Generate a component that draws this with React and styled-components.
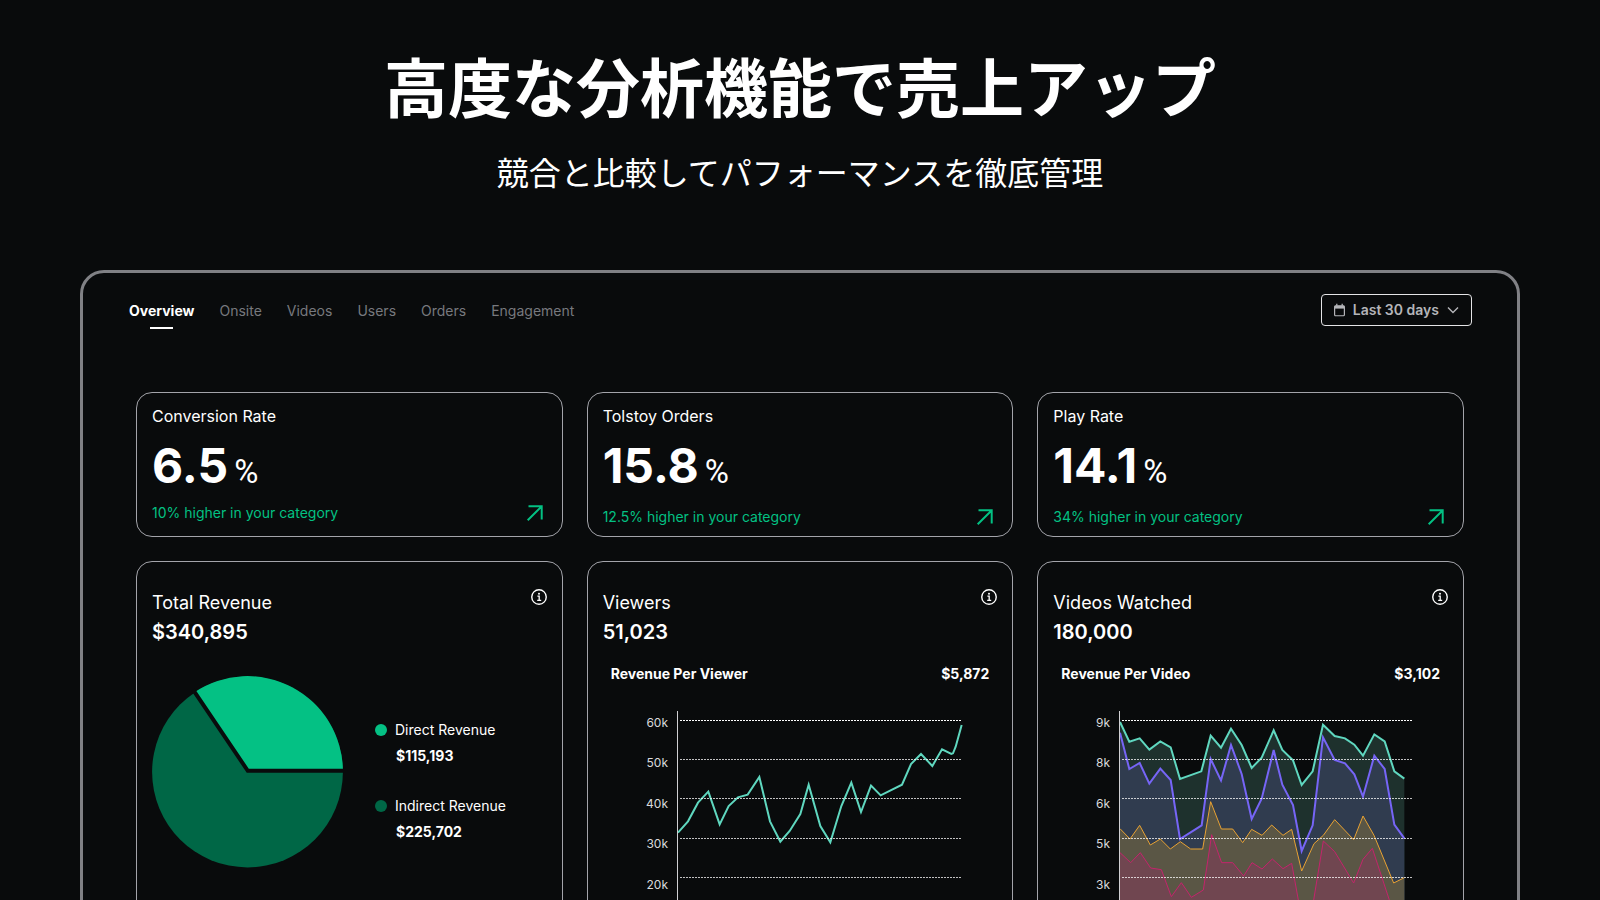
import React from "react";
import styled, { createGlobalStyle } from "styled-components";

const GlobalStyle = createGlobalStyle`
  *, *::before, *::after { box-sizing: border-box; }
  body {
    margin: 0;
    background: #090b0c;
    color: #fff;
    font-family: Inter, "Noto Sans CJK JP", sans-serif;
  }
`;

const Page = styled.main`
  height: 100vh;
  overflow: hidden;
  padding: 36px 80px 0;
  display: flex;
  flex-direction: column;
`;

const Hero = styled.header`
  display: flex;
  flex-direction: column;
  align-items: center;
  gap: 15px;
  text-align: center;
  font-family: "Noto Sans CJK JP", sans-serif;
`;

const Headline = styled.h1`
  margin: 0;
  font-size: 64px;
  line-height: 96px;
  font-weight: 700;
`;

const Tagline = styled.p`
  margin: 0;
  font-size: 32px;
  line-height: 48px;
  font-weight: 400;
`;

const Panel = styled.section`
  flex: none;
  margin-top: 75px;
  padding: 21px 45px 48px;
  border: 3px solid #808185;
  border-radius: 24px;
`;

const Toolbar = styled.div`
  display: flex;
  align-items: flex-start;
  justify-content: space-between;
`;

const Tabs = styled.nav`
  display: flex;
  gap: 25px;
  padding: 6px 0 0 1px;
`;

const Tab = styled.a`
  display: flex;
  flex-direction: column;
  align-items: center;
  gap: 5px;
  font-size: 14px;
  line-height: 22px;
  text-decoration: none;
  color: ${(p) => (p.$active ? "#fff" : "#77797e")};
  font-weight: ${(p) => (p.$active ? 700 : 400)};

  &::after {
    content: "";
    width: 23px;
    height: 2px;
    background: ${(p) => (p.$active ? "#fff" : "transparent")};
  }
`;

const RangeButton = styled.button`
  display: flex;
  align-items: center;
  gap: 8px;
  height: 32px;
  padding: 0 12px;
  border: 1px solid #e4e4e6;
  border-radius: 4px;
  background: transparent;
  color: #b4b5b9;
  font: 600 14px/20px Inter, sans-serif;
  cursor: pointer;
`;

const Grid = styled.div`
  display: grid;
  grid-template-columns: repeat(3, minmax(0, 1fr));
  gap: 24px;
  padding: 63px 8px 0;
`;

const Card = styled.article`
  border: 1px solid #a3a4aa;
  border-radius: 16px;
`;

const StatCard = styled(Card)`
  height: 145px;
  padding: 11px 15px 0;
  display: flex;
  flex-direction: column;
`;

const StatTitle = styled.h2`
  margin: 0;
  font-size: 16px;
  line-height: 24px;
  font-weight: 400;
`;

const StatValue = styled.p`
  margin: 9px 0 0;
  display: flex;
  align-items: baseline;
  gap: 6px;
  height: 58px;
  font-size: 48px;
  line-height: 58px;
  font-weight: 700;
`;

const Unit = styled.span`
  font-family: Roboto, sans-serif;
  font-size: 33px;
  font-weight: 400;
`;

const StatNote = styled.div`
  display: flex;
  align-items: center;
  justify-content: space-between;
  margin-top: ${(p) => (p.$roomy ? 10 : 6)}px;
  font-size: 14px;
  line-height: 24px;
  color: #03c183;
`;

const ChartCard = styled(Card)`
  height: 400px;
  padding: 27px 15px 0;
`;

const CardHead = styled.div`
  display: flex;
  justify-content: space-between;
  align-items: flex-start;
`;

const Metric = styled.div`
  padding-top: 1px;
`;

const MetricTitle = styled.h2`
  margin: 0;
  font-size: 18px;
  line-height: 26px;
  font-weight: 400;
`;

const MetricValue = styled.p`
  margin: 1px 0 0;
  font-size: 20px;
  line-height: 30px;
  font-weight: 600;
`;

const SubMetric = styled.div`
  display: flex;
  justify-content: space-between;
  margin-top: 17px;
  padding: 0 8px;
  font-size: 14px;
  line-height: 20px;
  font-weight: 700;
`;

const Chart = styled.svg`
  display: block;
  margin-top: 16px;
  overflow: visible;
  font-size: 12px;
  fill: #d9dadc;
`;

const RevenueSplit = styled.div`
  display: flex;
  align-items: center;
  gap: 31px;
  margin-top: 29px;
`;

const Legend = styled.dl`
  margin: 0;
  padding-top: 18px;
  display: flex;
  flex-direction: column;
  gap: 30px;
  font-size: 14px;
  line-height: 20px;
`;

const LegendName = styled.dt`
  display: flex;
  align-items: center;
  gap: 8px;

  &::before {
    content: "";
    width: 12px;
    height: 12px;
    border-radius: 50%;
    background: ${(p) => p.$color};
  }
`;

const LegendValue = styled.dd`
  margin: 6px 0 0 21px;
  font-weight: 700;
`;

const TABS = ["Overview", "Onsite", "Videos", "Users", "Orders", "Engagement"];

const STATS = [
  { title: "Conversion Rate", value: "6.5", note: "10% higher in your category" },
  { title: "Tolstoy Orders", value: "15.8", note: "12.5% higher in your category", roomy: true },
  { title: "Play Rate", value: "14.1", note: "34% higher in your category", roomy: true },
];

const GRID_LINES = [20, 59, 98, 138, 177];
const LABEL_BASELINES = [27, 67, 108, 148, 189];

// Series points are stored three units to a pixel, measured from the axis.
const UNIT = 3;

const VIEWERS = [
  [0, 398], [30, 364], [60, 308], [91, 275], [125, 373], [152, 318], [180, 292], [209, 284],
  [244, 231], [276, 364], [307, 425], [335, 393], [367, 342], [392, 254], [427, 378], [457, 427],
  [490, 318], [520, 248], [549, 336], [579, 257], [608, 286], [672, 254], [699, 192], [729, 162],
  [763, 198], [792, 148], [820, 162], [825, 160], [833, 140], [851, 75],
];

const VIDEO_SERIES = [
  {
    stroke: "#5fd7bf", fill: "#1e312d", width: 2,
    points: [
      [0, 66], [28, 125], [59, 115], [88, 149], [121, 124], [152, 142], [180, 237], [244, 214],
      [272, 107], [303, 143], [333, 86], [365, 135], [395, 204], [425, 173], [461, 91], [487, 150],
      [519, 181], [545, 255], [578, 214], [609, 74], [644, 108], [675, 115], [703, 134], [729, 167],
      [763, 103], [794, 124], [823, 214], [853, 236],
    ],
  },
  {
    stroke: "#7665f6", fill: "#303c4f", width: 2,
    points: [
      [0, 98], [28, 207], [59, 189], [88, 251], [121, 206], [152, 240], [180, 417], [245, 376],
      [272, 177], [303, 241], [333, 135], [365, 222], [395, 357], [425, 296], [461, 150], [487, 254],
      [519, 315], [545, 453], [578, 376], [609, 112], [644, 180], [675, 190], [703, 223], [729, 290],
      [763, 167], [794, 207], [823, 374], [853, 415],
    ],
  },
  {
    stroke: "#e8a233", fill: "#5a5645", width: 1,
    points: [
      [0, 386], [30, 417], [59, 376], [91, 435], [121, 417], [151, 447], [181, 425], [212, 447],
      [248, 447], [272, 305], [304, 387], [338, 387], [368, 428], [395, 388], [426, 406], [455, 375],
      [489, 406], [515, 388], [545, 513], [582, 431], [610, 406], [644, 359], [701, 419], [729, 348],
      [762, 406], [821, 549], [853, 533],
    ],
  },
  {
    stroke: "#c4246c", fill: "#704650", width: 1,
    points: [
      [0, 458], [32, 488], [61, 458], [92, 504], [124, 509], [154, 590], [184, 548], [214, 592],
      [250, 570], [275, 404], [305, 488], [338, 488], [371, 528], [396, 488], [426, 507], [457, 477],
      [489, 506], [515, 490], [535, 600], [546, 640], [572, 640], [581, 600], [610, 423], [644, 455],
      [701, 549], [729, 478], [757, 445], [808, 600], [822, 640], [853, 630],
    ],
  },
];

const AREA_FLOOR = 660;

function toPoints(points, axisX) {
  return points.map(([x, y]) => `${axisX + x / UNIT},${y / UNIT}`).join(" ");
}

function toArea(points, axisX) {
  const last = points[points.length - 1][0];
  return toPoints([...points, [last, AREA_FLOOR], [0, AREA_FLOOR]], axisX);
}

function CalendarIcon() {
  return (
    <svg width="11" height="14" viewBox="0 0 11 14" fill="none" stroke="currentColor" aria-hidden="true">
      <rect x="0.6" y="2.75" width="9.8" height="10" rx="1" strokeWidth="1.2" />
      <path d="M0.8 4.2h9.4" strokeWidth="2.8" />
      <path d="M2.8 0.8v2M8.2 0.8v2" strokeWidth="1.3" />
    </svg>
  );
}

function ChevronIcon() {
  return (
    <svg width="12" height="8" viewBox="0 0 12 8" fill="none" stroke="currentColor" strokeWidth="1.4" aria-hidden="true">
      <path d="M1 1.5l5 5 5-5" />
    </svg>
  );
}

function ArrowIcon() {
  return (
    <svg width="24" height="24" viewBox="0 0 24 24" fill="none" stroke="currentColor" strokeWidth="2" aria-hidden="true">
      <path d="M5.5 5.3h13.2v13.2M18.3 5.7L4.7 19.3" />
    </svg>
  );
}

function InfoIcon() {
  return (
    <svg width="16" height="16" viewBox="0 0 16 16" fill="none" stroke="#fff" role="img" aria-label="Info">
      <circle cx="8" cy="8" r="7.25" strokeWidth="1.4" />
      <path d="M6.4 7.2H8.2V11M6.2 11.3h4" strokeWidth="1.3" />
      <circle cx="8" cy="4.8" r="1" fill="#fff" stroke="none" />
    </svg>
  );
}

function Axis({ x, end, labels, children }) {
  return (
    <Chart width="394" height="220" viewBox="0 0 394 220">
      {labels.map((label, i) => (
        <text key={label} x={x - 9} y={LABEL_BASELINES[i]} textAnchor="end">{label}</text>
      ))}
      {children}
      <path d={`M${x + 0.5} 11V220`} stroke="#d0d0d3" />
      {GRID_LINES.map((y, i) => (
        <path
          key={y}
          d={`M${x + 3} ${y + 0.5}H${end}`}
          stroke="#fff"
          strokeOpacity={i === 0 ? 1 : 0.75}
          strokeDasharray="2 1"
        />
      ))}
    </Chart>
  );
}

function Summary({ title, value }) {
  return (
    <CardHead>
      <Metric>
        <MetricTitle>{title}</MetricTitle>
        <MetricValue>{value}</MetricValue>
      </Metric>
      <InfoIcon />
    </CardHead>
  );
}

export default function App() {
  return (
    <>
      <GlobalStyle />
      <Page lang="ja">
        <Hero>
          <Headline>高度な分析機能で売上アップ</Headline>
          <Tagline>競合と比較してパフォーマンスを徹底管理</Tagline>
        </Hero>
        <Panel lang="en">
          <Toolbar>
            <Tabs>
              {TABS.map((tab, i) => (
                <Tab key={tab} href={`#${tab.toLowerCase()}`} $active={i === 0}>{tab}</Tab>
              ))}
            </Tabs>
            <RangeButton type="button">
              <CalendarIcon />
              Last 30 days
              <ChevronIcon />
            </RangeButton>
          </Toolbar>
          <Grid>
            {STATS.map((stat) => (
              <StatCard key={stat.title}>
                <StatTitle>{stat.title}</StatTitle>
                <StatValue>{stat.value}<Unit>%</Unit></StatValue>
                <StatNote $roomy={stat.roomy}>{stat.note}<ArrowIcon /></StatNote>
              </StatCard>
            ))}
            <ChartCard>
              <Summary title="Total Revenue" value="$340,895" />
              <RevenueSplit>
                <svg width="192" height="192" viewBox="0 0 192 192" role="img" aria-label="Revenue split">
                  <circle cx="95.5" cy="96" r="95.4" fill="#006746" />
                  <path d="M95.8 94.8H190.9A95.4 95.4 0 0 0 42.5 16.2Z" fill="#04c184" />
                  <path d="M192 94.8H95.8L41 13.6" fill="none" stroke="#090b0c" strokeWidth="4" />
                </svg>
                <Legend>
                  <div>
                    <LegendName $color="#04c184">Direct Revenue</LegendName>
                    <LegendValue>$115,193</LegendValue>
                  </div>
                  <div>
                    <LegendName $color="#006746">Indirect Revenue</LegendName>
                    <LegendValue>$225,702</LegendValue>
                  </div>
                </Legend>
              </RevenueSplit>
            </ChartCard>
            <ChartCard>
              <Summary title="Viewers" value="51,023" />
              <SubMetric><span>Revenue Per Viewer</span><span>$5,872</span></SubMetric>
              <Axis x={74} end={359} labels={["60k", "50k", "40k", "30k", "20k"]}>
                <polyline points={toPoints(VIEWERS, 75)} fill="none" stroke="#5fd7bf" strokeWidth="2" />
              </Axis>
            </ChartCard>
            <ChartCard>
              <Summary title="Videos Watched" value="180,000" />
              <SubMetric><span>Revenue Per Video</span><span>$3,102</span></SubMetric>
              <Axis x={66} end={360} labels={["9k", "8k", "6k", "5k", "3k"]}>
                {VIDEO_SERIES.map((s) => (
                  <g key={s.stroke}>
                    <polygon points={toArea(s.points, 67)} fill={s.fill} />
                    <polyline points={toPoints(s.points, 67)} fill="none" stroke={s.stroke} strokeWidth={s.width} />
                  </g>
                ))}
              </Axis>
            </ChartCard>
          </Grid>
        </Panel>
      </Page>
    </>
  );
}
